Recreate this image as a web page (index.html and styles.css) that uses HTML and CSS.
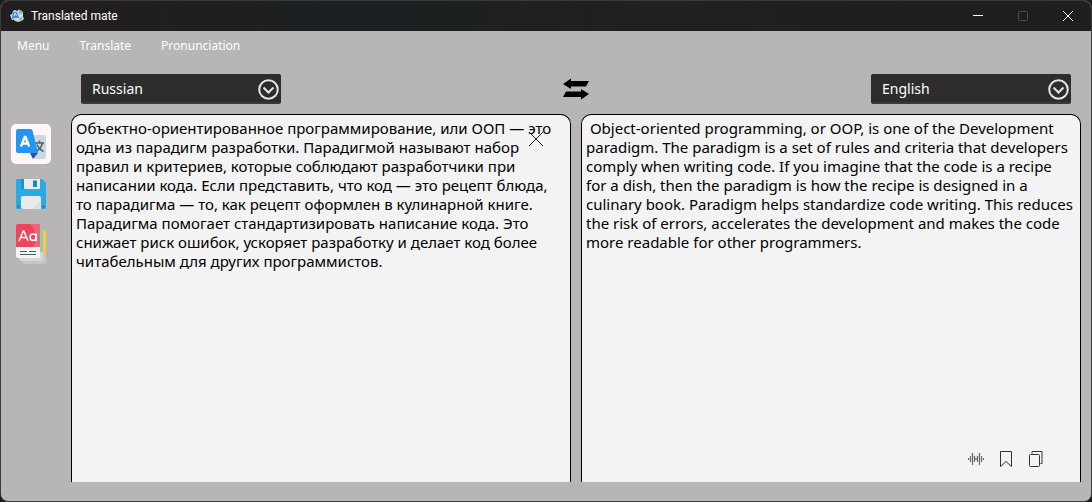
FILE: index.html
```html
<!DOCTYPE html>
<html lang="en">
<head>
<meta charset="utf-8">
<title>Translated mate</title>
<link rel="stylesheet" href="styles.css">
</head>
<body>
<div class="window">
  <header class="titlebar">
    <svg class="app-icon" viewBox="0 0 14 14" aria-hidden="true">
      <path fill="#c5dcda" d="M3 2l2-1 2 1 2-1.500 3 1.500 1 2v4l1 1-1 2-2 1-3 1-3-1-1-1H2L0 6l2-1z"/>
      <path fill="#7fa3a8" d="M9 1l3 2-1 2-2-1zM10 9l2-1v2l-3 2zM2 8l2 2 1 2-3-2z"/>
      <path fill="#4289e8" d="M3 3h4l2 6H2z"/>
      <path fill="none" stroke="#b9dcff" d="M4 7l1-3 1.500 3"/>
    </svg>
    <h1 class="app-name">Translated mate</h1>
    <div class="window-buttons">
      <button class="window-button" type="button" aria-label="Minimize">
        <svg viewBox="0 0 12 12"><path d="M1 5.500h10"/></svg>
      </button>
      <button class="window-button" type="button" aria-label="Maximize" disabled>
        <svg viewBox="0 0 12 12"><rect x="1.500" y="1.500" width="9" height="9" rx="1"/></svg>
      </button>
      <button class="window-button" type="button" aria-label="Close">
        <svg viewBox="0 0 12 12"><path d="M1 1l10 10M11 1L1 11"/></svg>
      </button>
    </div>
  </header>

  <nav class="menubar" aria-label="Main menu">
    <button class="menu-item" type="button">Menu</button>
    <button class="menu-item" type="button">Translate</button>
    <button class="menu-item" type="button">Pronunciation</button>
  </nav>

  <div class="body">
    <aside class="sidebar">
      <button class="side-button side-button-active" type="button" aria-label="Translator">
        <svg viewBox="0 0 30 30">
          <path fill="#cfd8df" d="M14 6h14a2 2 0 0 1 2 2v20a2 2 0 0 1-2 2H17z"/>
          <path fill="none" stroke="#536471" stroke-width="1.600" d="M18 14h10M23.500 11.500V14M26.500 14c-1 4-3 7-7.500 9M21 15.500c1 3 3 5 6.500 7"/>
          <path fill="#3949ab" d="M14 24h8l-5 6z"/>
          <path fill="#2196f3" d="M2 0h12.500a2 2 0 0 1 2 1.500L22 24H2a2 2 0 0 1-2-2V2a2 2 0 0 1 2-2z"/>
          <path fill="none" stroke="#fff" stroke-width="2.400" d="M5 17.500L8.700 8h.8l3.700 9.500M6.500 14.500h5"/>
        </svg>
      </button>
      <button class="side-button" type="button" aria-label="Save">
        <svg viewBox="0 0 30 30">
          <path fill="#2aaae2" d="M1 0h25l4 4v25a1 1 0 0 1-1 1H1a1 1 0 0 1-1-1V1a1 1 0 0 1 1-1z"/>
          <path fill="#1d93cd" d="M5 0h4v10H6a1 1 0 0 1-1-1z"/>
          <path fill="#ececec" d="M8 0h16v9a1 1 0 0 1-1 1H9a1 1 0 0 1-1-1z"/>
          <path fill="#1687b8" d="M17 1.500h4v6.500h-4z"/>
          <rect fill="#ebebeb" x="5" y="17" width="20" height="13" rx="2"/>
          <path fill="#e0e0e0" d="M16 30l9-9v9z"/>
          <circle cx="2.500" cy="27.500" r="1" fill="#176a99"/><circle cx="27.500" cy="27.500" r="1" fill="#176a99"/>
        </svg>
      </button>
      <button class="side-button side-button-tall" type="button" aria-label="Dictionary">
        <svg viewBox="0 0 30 40">
          <path fill="#ffc34d" d="M22 6h6a2 2 0 0 1 2 2v22h-8z"/>
          <path fill="#7ed6a5" d="M20 3h5a2 2 0 0 1 2 2v26h-7z"/>
          <path fill="#c9c6cb" d="M27 29h3v8a3 3 0 0 1-3 3H9a3 3 0 0 1-3-3z"/>
          <path fill="#d9d5d9" d="M24 28h3v6a3 3 0 0 1-3 3H6a3 3 0 0 1-3-3z"/>
          <path fill="#ed455d" d="M2 0h20a2 2 0 0 1 2 2v21H0V2a2 2 0 0 1 2-2z"/>
          <path fill="#f0647a" d="M14 0h8a2 2 0 0 1 2 2v21h-7C22 16 20 6 14 0z"/>
          <path fill="#f5f4f6" d="M0 23h24v9a2 2 0 0 1-2 2H2a2 2 0 0 1-2-2z"/>
          <path fill="none" stroke="#fff" stroke-width="1.500" d="M3 17L7.300 7h.5L12 17M4.500 13.500h6"/>
          <path fill="none" stroke="#fff" stroke-width="1.500" d="M20.200 9.500V17M20 13.200a3 3.200 0 1 1-6 0 3 3.200 0 1 1 6 0"/>
          <path fill="none" stroke="#42665e" d="M4 27.500h7M13 27.500h7M4 30.500h16"/>
        </svg>
      </button>
    </aside>

    <main class="workspace">
      <div class="languages">
        <div class="picker">
          <select class="picker-select" aria-label="Source language"><option>Russian</option><option>English</option></select>
          <svg class="picker-arrow" viewBox="0 0 21 21"><circle cx="10.500" cy="10.500" r="9.300"/><path d="M5.500 8.500l5 5 5-5"/></svg>
        </div>
        <button class="swap" type="button" aria-label="Swap languages">
          <svg viewBox="0 0 26 22"><path d="M0 6l8-5.500V3h18l-3 5.500H8v2.500zM26 16l-8 5.500V19H0l3-5.500h15V11z"/></svg>
        </button>
        <div class="picker">
          <select class="picker-select" aria-label="Target language"><option>English</option><option>Russian</option></select>
          <svg class="picker-arrow" viewBox="0 0 21 21"><circle cx="10.500" cy="10.500" r="9.300"/><path d="M5.500 8.500l5 5 5-5"/></svg>
        </div>
      </div>

      <div class="panes">
        <div class="pane">
          <textarea class="pane-text" aria-label="Source text" wrap="off" spellcheck="false">Объектно-ориентированное программирование, или ООП — это
одна из парадигм разработки. Парадигмой называют набор
правил и критериев, которые соблюдают разработчики при
написании кода. Если представить, что код — это рецепт блюда,
то парадигма — то, как рецепт оформлен в кулинарной книге.
Парадигма помогает стандартизировать написание кода. Это
снижает риск ошибок, ускоряет разработку и делает код более
читабельным для других программистов.</textarea>
          <button class="clear" type="button" aria-label="Clear text">
            <svg viewBox="0 0 16 16"><path d="M1 1l14 14M15 1L1 15"/></svg>
          </button>
        </div>
        <div class="pane">
          <textarea class="pane-text" aria-label="Translated text" wrap="off" spellcheck="false" readonly> Object-oriented programming, or OOP, is one of the Development
paradigm. The paradigm is a set of rules and criteria that developers
comply when writing code. If you imagine that the code is a recipe
for a dish, then the paradigm is how the recipe is designed in a
culinary book. Paradigm helps standardize code writing. This reduces
the risk of errors, accelerates the development and makes the code
more readable for other programmers.</textarea>
          <div class="pane-tools">
            <button class="tool" type="button" aria-label="Listen">
              <svg viewBox="0 0 16 16"><path stroke="#666" stroke-width="1.200" d="M.5 7v2M2.500 5v6M4.500 2v12M6.500 5v6M8 7v2M9.500 5v6M11.500 2v12M13.500 5v6M15.500 7v2"/></svg>
            </button>
            <button class="tool" type="button" aria-label="Bookmark">
              <svg viewBox="0 0 16 16"><path d="M2.500.5h11v15L8 10.500l-5.500 5z"/></svg>
            </button>
            <button class="tool" type="button" aria-label="Copy">
              <svg viewBox="0 0 16 16"><rect x="1.500" y="3.500" width="10" height="12" rx="1"/><path d="M4 2.500V.5h10v12h-1.500"/></svg>
            </button>
          </div>
        </div>
      </div>
    </main>
  </div>
</div>
</body>
</html>
```
FILE: styles.css
```css
* { box-sizing: border-box; }

body {
  margin: 0;
  background: #1b1c1a;
  color: #000;
  font-family: "Noto Sans", "Liberation Sans", sans-serif;
}

button {
  margin: 0;
  padding: 0;
  border: 0;
  background: none;
  font: inherit;
  color: inherit;
}

svg { display: block; fill: none; }

.window {
  display: flex;
  flex-direction: column;
  height: 100vh;
  overflow: hidden;
  border: 1px solid #3c3b3c;
  border-radius: 8px;
  background: #b8b5b6;
}

.titlebar {
  display: flex;
  align-items: center;
  height: 30px;
  padding-left: 9px;
  background: linear-gradient(90deg, #231d1f, #1c2022 30%, #1f2020 60%, #201e1f);
  color: #fff;
}

.app-icon { width: 14px; height: 14px; }

.app-name {
  flex: 1;
  margin: 0 0 0 7px;
  font-family: Roboto, "Noto Sans", sans-serif;
  font-size: 12px;
  line-height: 16px;
  font-weight: 400;
}

.window-buttons { display: flex; padding-right: 1px; }

.window-button {
  display: grid;
  place-items: center;
  width: 45px;
  height: 30px;
}

.window-button svg { width: 12px; height: 12px; stroke: #fff; }
.window-button:disabled svg { stroke: #4d4c4c; }

.menubar {
  display: flex;
  gap: 30px;
  padding: 7px 16px;
  color: #fff;
  font-size: 12px;
  line-height: 16px;
}

.body {
  flex: 1;
  display: flex;
  min-height: 0;
  padding: 13px 10px 19px;
  gap: 20px;
}

.sidebar {
  display: flex;
  flex-direction: column;
  align-items: center;
  gap: 10px;
  width: 40px;
  padding-top: 50px;
}

.side-button {
  display: grid;
  place-items: center;
  width: 40px;
  height: 40px;
  border-radius: 5px;
}

.side-button-active { background: #fff6f8; }
.side-button svg { width: 30px; height: 30px; }
.side-button-tall svg { height: 40px; }

.workspace {
  flex: 1;
  display: flex;
  flex-direction: column;
  gap: 10px;
  min-width: 0;
}

.languages {
  display: flex;
  align-items: center;
  justify-content: space-between;
  padding: 0 10px;
}

.picker {
  display: grid;
  align-items: center;
  width: 200px;
}

.picker-select {
  grid-area: 1 / 1;
  appearance: none;
  height: 30px;
  margin: 0;
  padding: 0 30px 0 11px;
  border: 0;
  border-bottom: 2px solid #3a3838;
  border-radius: 2px;
  background: #2d2d2d;
  color: #fff;
  font: inherit;
  font-size: 14px;
}

.picker-arrow {
  grid-area: 1 / 1;
  justify-self: end;
  width: 21px;
  height: 21px;
  margin-right: 2px;
  stroke: #e6e4e4;
  stroke-width: 2;
  pointer-events: none;
}

.swap svg { width: 26px; height: 22px; fill: #000; }

.panes {
  flex: 1;
  display: grid;
  grid-template-columns: 1fr 1fr;
  gap: 10px;
  min-height: 0;
}

.pane { position: relative; display: flex; min-width: 0; }

.pane-text {
  flex: 1;
  min-width: 0;
  margin: 0;
  padding: 4px;
  border: 1px solid #000;
  border-bottom: 0;
  border-radius: 10px 10px 0 0;
  outline: 0;
  overflow: hidden;
  resize: none;
  background: #f3f3f3;
  color: #000;
  font: inherit;
  font-size: 15px;
  line-height: 19px;
}

.clear { position: absolute; top: 17px; right: 27px; }
.clear svg { width: 16px; height: 16px; stroke: #222; }

.pane-tools {
  position: absolute;
  right: 37px;
  bottom: 15px;
  display: flex;
  gap: 14px;
}

.tool svg { width: 16px; height: 16px; stroke: #333; }
```
